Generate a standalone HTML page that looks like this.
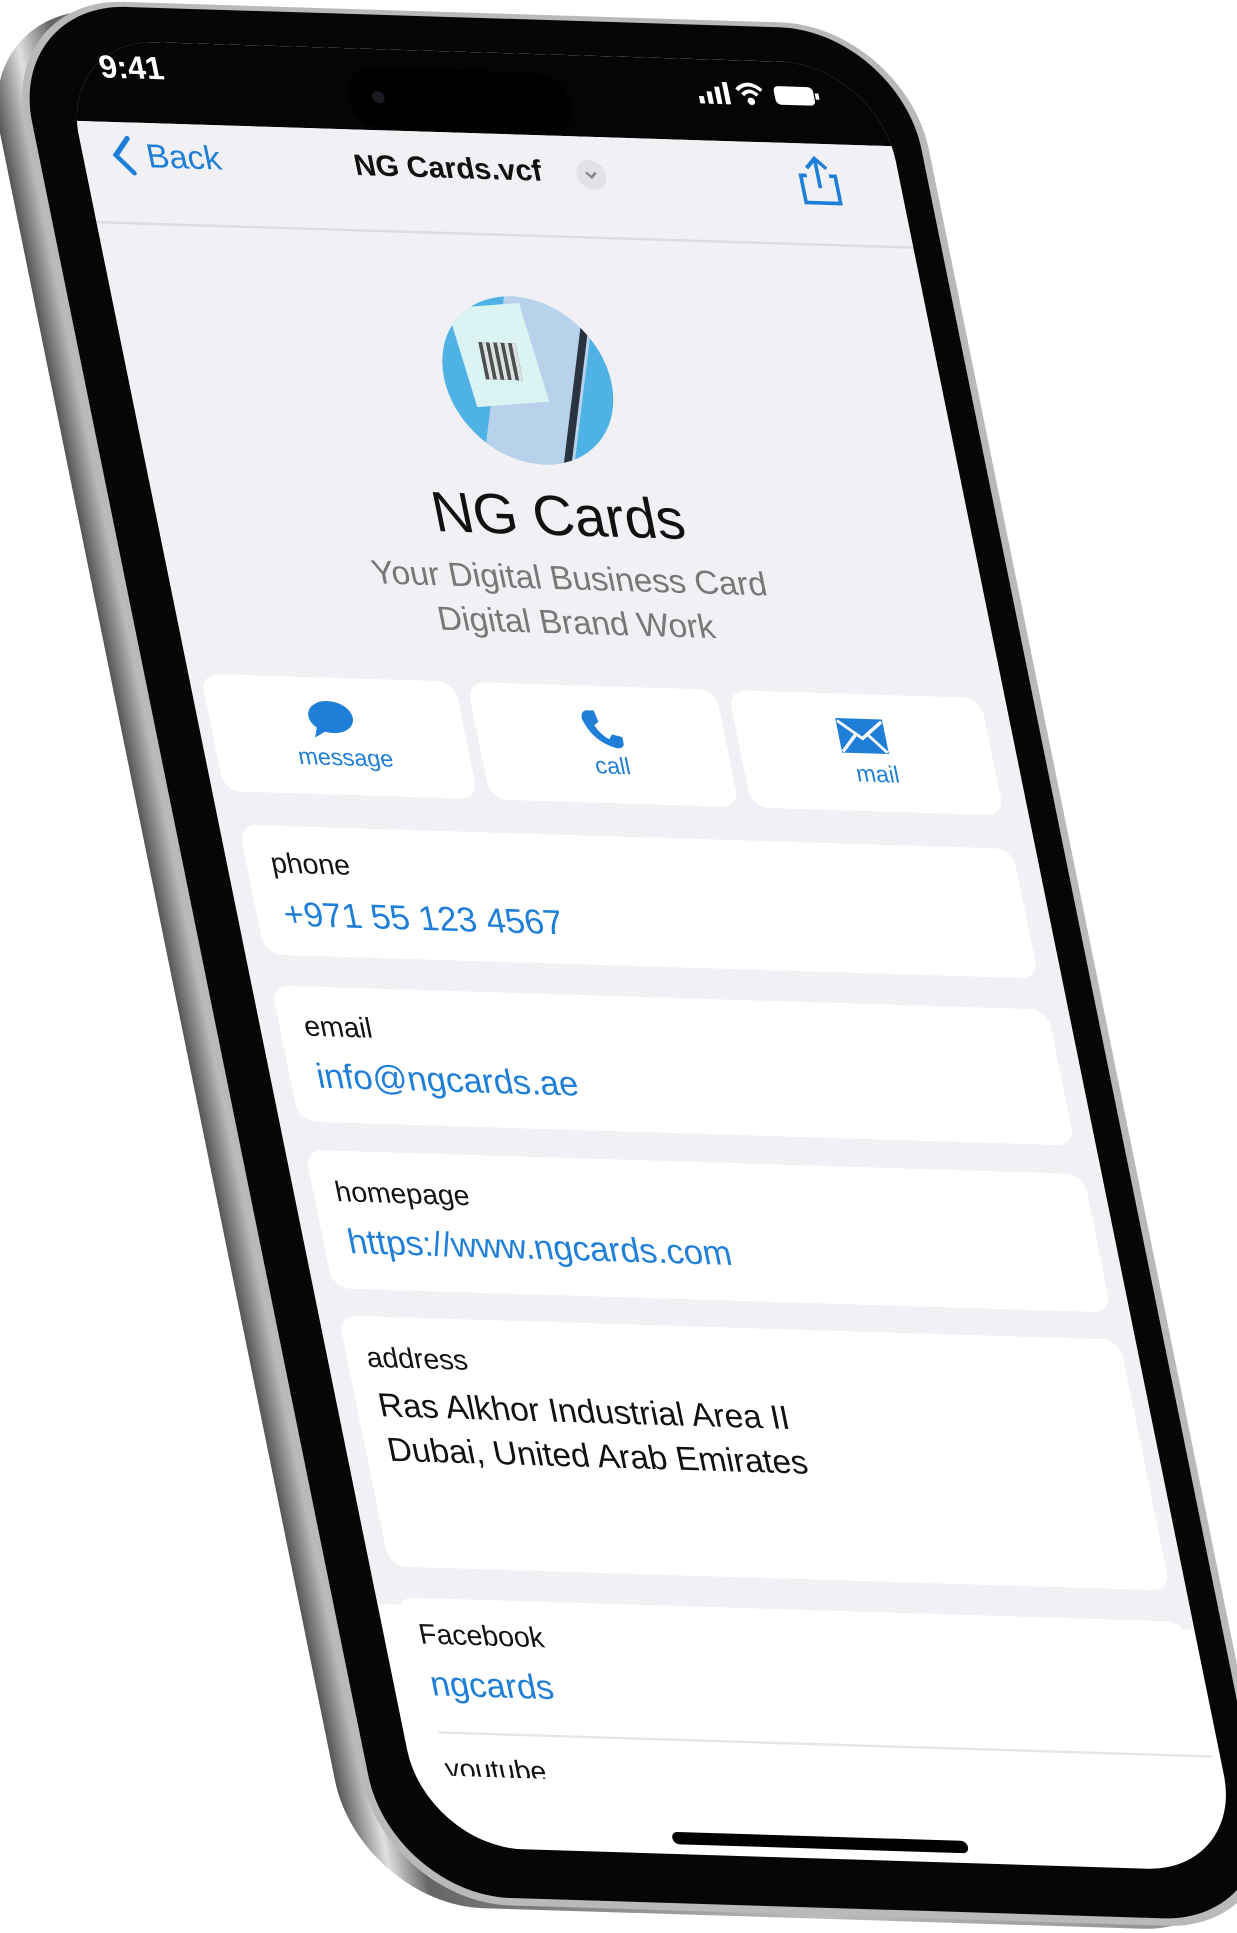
<!DOCTYPE html>
<html><head><meta charset="utf-8"><style>
html,body{margin:0;padding:0;background:#fff;width:1237px;height:1932px;overflow:hidden}
#wrap{position:absolute;left:0;top:0;width:1004px;height:1563px;transform:scale(1.232,1.236);transform-origin:0 0}
.frame{position:absolute;left:0;top:0;width:0;height:0;transform-origin:0 0}
#f{transform:matrix(1,0.031,0.204,1,70,100)}
.abs{position:absolute}
.t{font-family:"Liberation Sans",sans-serif;position:absolute;white-space:nowrap}
.blue{color:#1f7fd8}
.card{position:absolute;background:#fff;border-radius:14px}
.lbl{font-size:23px;color:#111}
.val{font-size:28px;color:#1f7fd8}
</style></head><body><div id="wrap">
<div class="frame" id="f">
 <div class="abs" style="left:-72px;top:-92px;width:735px;height:1535px;border-radius:100px;background:linear-gradient(90deg,#555,#e0e0e0 4%,#666 8%,#bbb 50%,#888);"></div>
 <div class="abs" style="left:-50px;top:-100px;width:734px;height:1540px;border-radius:100px;background:#b9b9b9;"></div>
 <div class="abs" style="left:-44px;top:-96px;width:722px;height:1530px;border-radius:96px;background:#060606;"></div>
 <!-- screen -->
 <div class="abs" style="left:-8px;top:-68px;width:663px;height:1462px;border-radius:78px;background:#fff;overflow:hidden;">
  <div class="abs" style="left:0;top:0;width:663px;height:66px;background:#050505"></div>
  <div class="abs" style="left:0;top:66px;width:663px;height:1200px;background:#f1f1f5"></div>
  <div class="abs" style="left:0;top:147px;width:663px;height:2px;background:#dcdce0"></div>
 </div>
 <!-- status -->
 <div class="t" style="left:20px;top:-62px;font-size:26px;color:#fff;font-weight:bold">9:41</div>
 <div class="abs" style="left:218px;top:-53px;width:182px;height:50px;border-radius:25px;background:#000"></div>
 <div class="abs" style="left:238px;top:-34px;width:10px;height:10px;border-radius:5px;background:#1a1a22"></div>
 <svg class="abs" style="left:505px;top:-52px" width="100" height="24" viewBox="0 0 100 24">
  <rect x="0" y="14" width="4" height="6" fill="#fff"/><rect x="7" y="10" width="4" height="10" fill="#fff"/><rect x="14" y="6" width="4" height="14" fill="#fff"/><rect x="21" y="2" width="4" height="18" fill="#fff"/>
  <path d="M32 8 Q42 -1 52 8 M36 12 Q42 6 48 12" stroke="#fff" stroke-width="3" fill="none"/><circle cx="42" cy="17" r="3" fill="#fff"/>
  <rect x="62" y="4" width="32" height="15" rx="4" fill="#fff"/><rect x="95" y="9" width="3" height="5" fill="#fff"/>
 </svg>
 <!-- nav -->
 <svg class="abs" style="left:15px;top:8px" width="20" height="34"><path d="M16 3 L4 17 L16 31" stroke="#1f7fd8" stroke-width="4" fill="none" stroke-linecap="round"/></svg>
 <div class="t blue" style="left:44px;top:10px;font-size:27px">Back</div>
 <div class="t" style="left:212px;top:14px;font-size:24px;font-weight:bold;color:#111">NG Cards.vcf</div>
 <div class="abs" style="left:392px;top:17px;width:24px;height:24px;border-radius:12px;background:#e2e2e6"></div>
 <svg class="abs" style="left:396px;top:22px" width="16" height="14"><path d="M4 5 L8 9 L12 5" stroke="#888" stroke-width="2" fill="none"/></svg>
 <svg class="abs" style="left:570px;top:6px" width="40" height="44"><path d="M10 18 H5 V40 H33 V18 H28 M19 28 V4 M11 12 L19 4 L27 12" stroke="#1f7fd8" stroke-width="3" fill="none"/></svg>
 <!-- avatar -->
 <div class="abs" style="left:250px;top:130px;width:136px;height:136px;border-radius:68px;overflow:hidden;background:#4fb2e4">
  <div class="abs" style="left:40px;top:-10px;width:70px;height:170px;background:#b7d2ea;transform:rotate(18deg)"></div>
  <div class="abs" style="left:100px;top:10px;width:6px;height:150px;background:#2a3340;transform:rotate(18deg)"></div>
  <div class="abs" style="left:18px;top:8px;width:60px;height:80px;background:#dcf3f3;transform:rotate(-6deg)"></div>
  <div class="abs" style="left:34px;top:38px;width:30px;height:30px;background:repeating-linear-gradient(90deg,#333 0 3px,#ddd 3px 6px),#333;opacity:.85"></div>
 </div>
 <div class="t" style="left:218px;top:280px;font-size:46px;color:#111">NG Cards</div>
 <div class="t" style="left:159px;top:343px;font-size:27px;color:#777">Your Digital Business Card</div>
 <div class="t" style="left:205px;top:379px;font-size:27px;color:#777">Digital Brand Work</div>
 <!-- buttons -->
 <div class="card" style="left:2px;top:445px;width:206px;height:95px"></div>
 <div class="card" style="left:218px;top:445px;width:202px;height:95px"></div>
 <div class="card" style="left:430px;top:445px;width:205px;height:95px"></div>
 <svg class="abs" style="left:82px;top:462px" width="40" height="34"><ellipse cx="19" cy="15" rx="18" ry="13" fill="#1f7fd8"/><path d="M6 24 L3 32 L14 26Z" fill="#1f7fd8"/></svg>
 <div class="t blue" style="left:68px;top:500px;font-size:19px">message</div>
 <svg class="abs" style="left:303px;top:462px" width="36" height="36"><path d="M8 3 L14 3 L16 12 L12 15 Q16 23 22 26 L25 22 L33 24 L33 30 Q31 34 26 33 Q8 28 3 10 Q3 4 8 3Z" fill="#1f7fd8"/></svg>
 <div class="t blue" style="left:309px;top:500px;font-size:19px">call</div>
 <svg class="abs" style="left:512px;top:464px" width="40" height="30"><rect x="1" y="1" width="38" height="28" fill="#1f7fd8"/><path d="M2 3 L20 17 L38 3 M2 28 L15 14 M38 28 L25 14" stroke="#fff" stroke-width="2.5" fill="none"/></svg>
 <div class="t blue" style="left:521px;top:500px;font-size:19px">mail</div>
 <!-- info cards -->
 <div class="card" style="left:8px;top:567px;width:628px;height:105px"></div>
 <div class="t lbl" style="left:28px;top:584px">phone</div>
 <div class="t val" style="left:30px;top:623px">+971 55 123 4567</div>
 <div class="card" style="left:8px;top:697px;width:630px;height:110px"></div>
 <div class="t lbl" style="left:28px;top:716px">email</div>
 <div class="t val" style="left:30px;top:754px">info@ngcards.ae</div>
 <div class="card" style="left:8px;top:830px;width:632px;height:112px"></div>
 <div class="t lbl" style="left:26px;top:850px">homepage</div>
 <div class="t val" style="left:28px;top:888px">https://www.ngcards.com</div>
 <div class="card" style="left:8px;top:964px;width:634px;height:203px"></div>
 <div class="t lbl" style="left:24px;top:984px">address</div>
 <div class="t" style="left:26px;top:1021px;font-size:27px;color:#111">Ras Alkhor Industrial Area II</div>
 <div class="t" style="left:26px;top:1057px;font-size:27px;color:#111">Dubai, United Arab Emirates</div>
 <div class="card" style="left:8px;top:1192px;width:640px;height:100px;border-radius:14px 14px 0 0"></div>
 <div class="t lbl" style="left:21px;top:1208px">Facebook</div>
 <div class="t val" style="left:22px;top:1246px">ngcards</div>
 <div class="abs" style="left:20px;top:1300px;width:628px;height:2px;background:#e6e6ea"></div>
 <div class="abs" style="left:10px;top:1312px;width:640px;height:24px;overflow:hidden"><div class="t lbl" style="left:10px;top:5px">youtube</div></div>
 <div class="abs" style="left:194px;top:1376px;width:240px;height:10px;border-radius:5px;background:#000"></div>
</div>
</div></body></html>
